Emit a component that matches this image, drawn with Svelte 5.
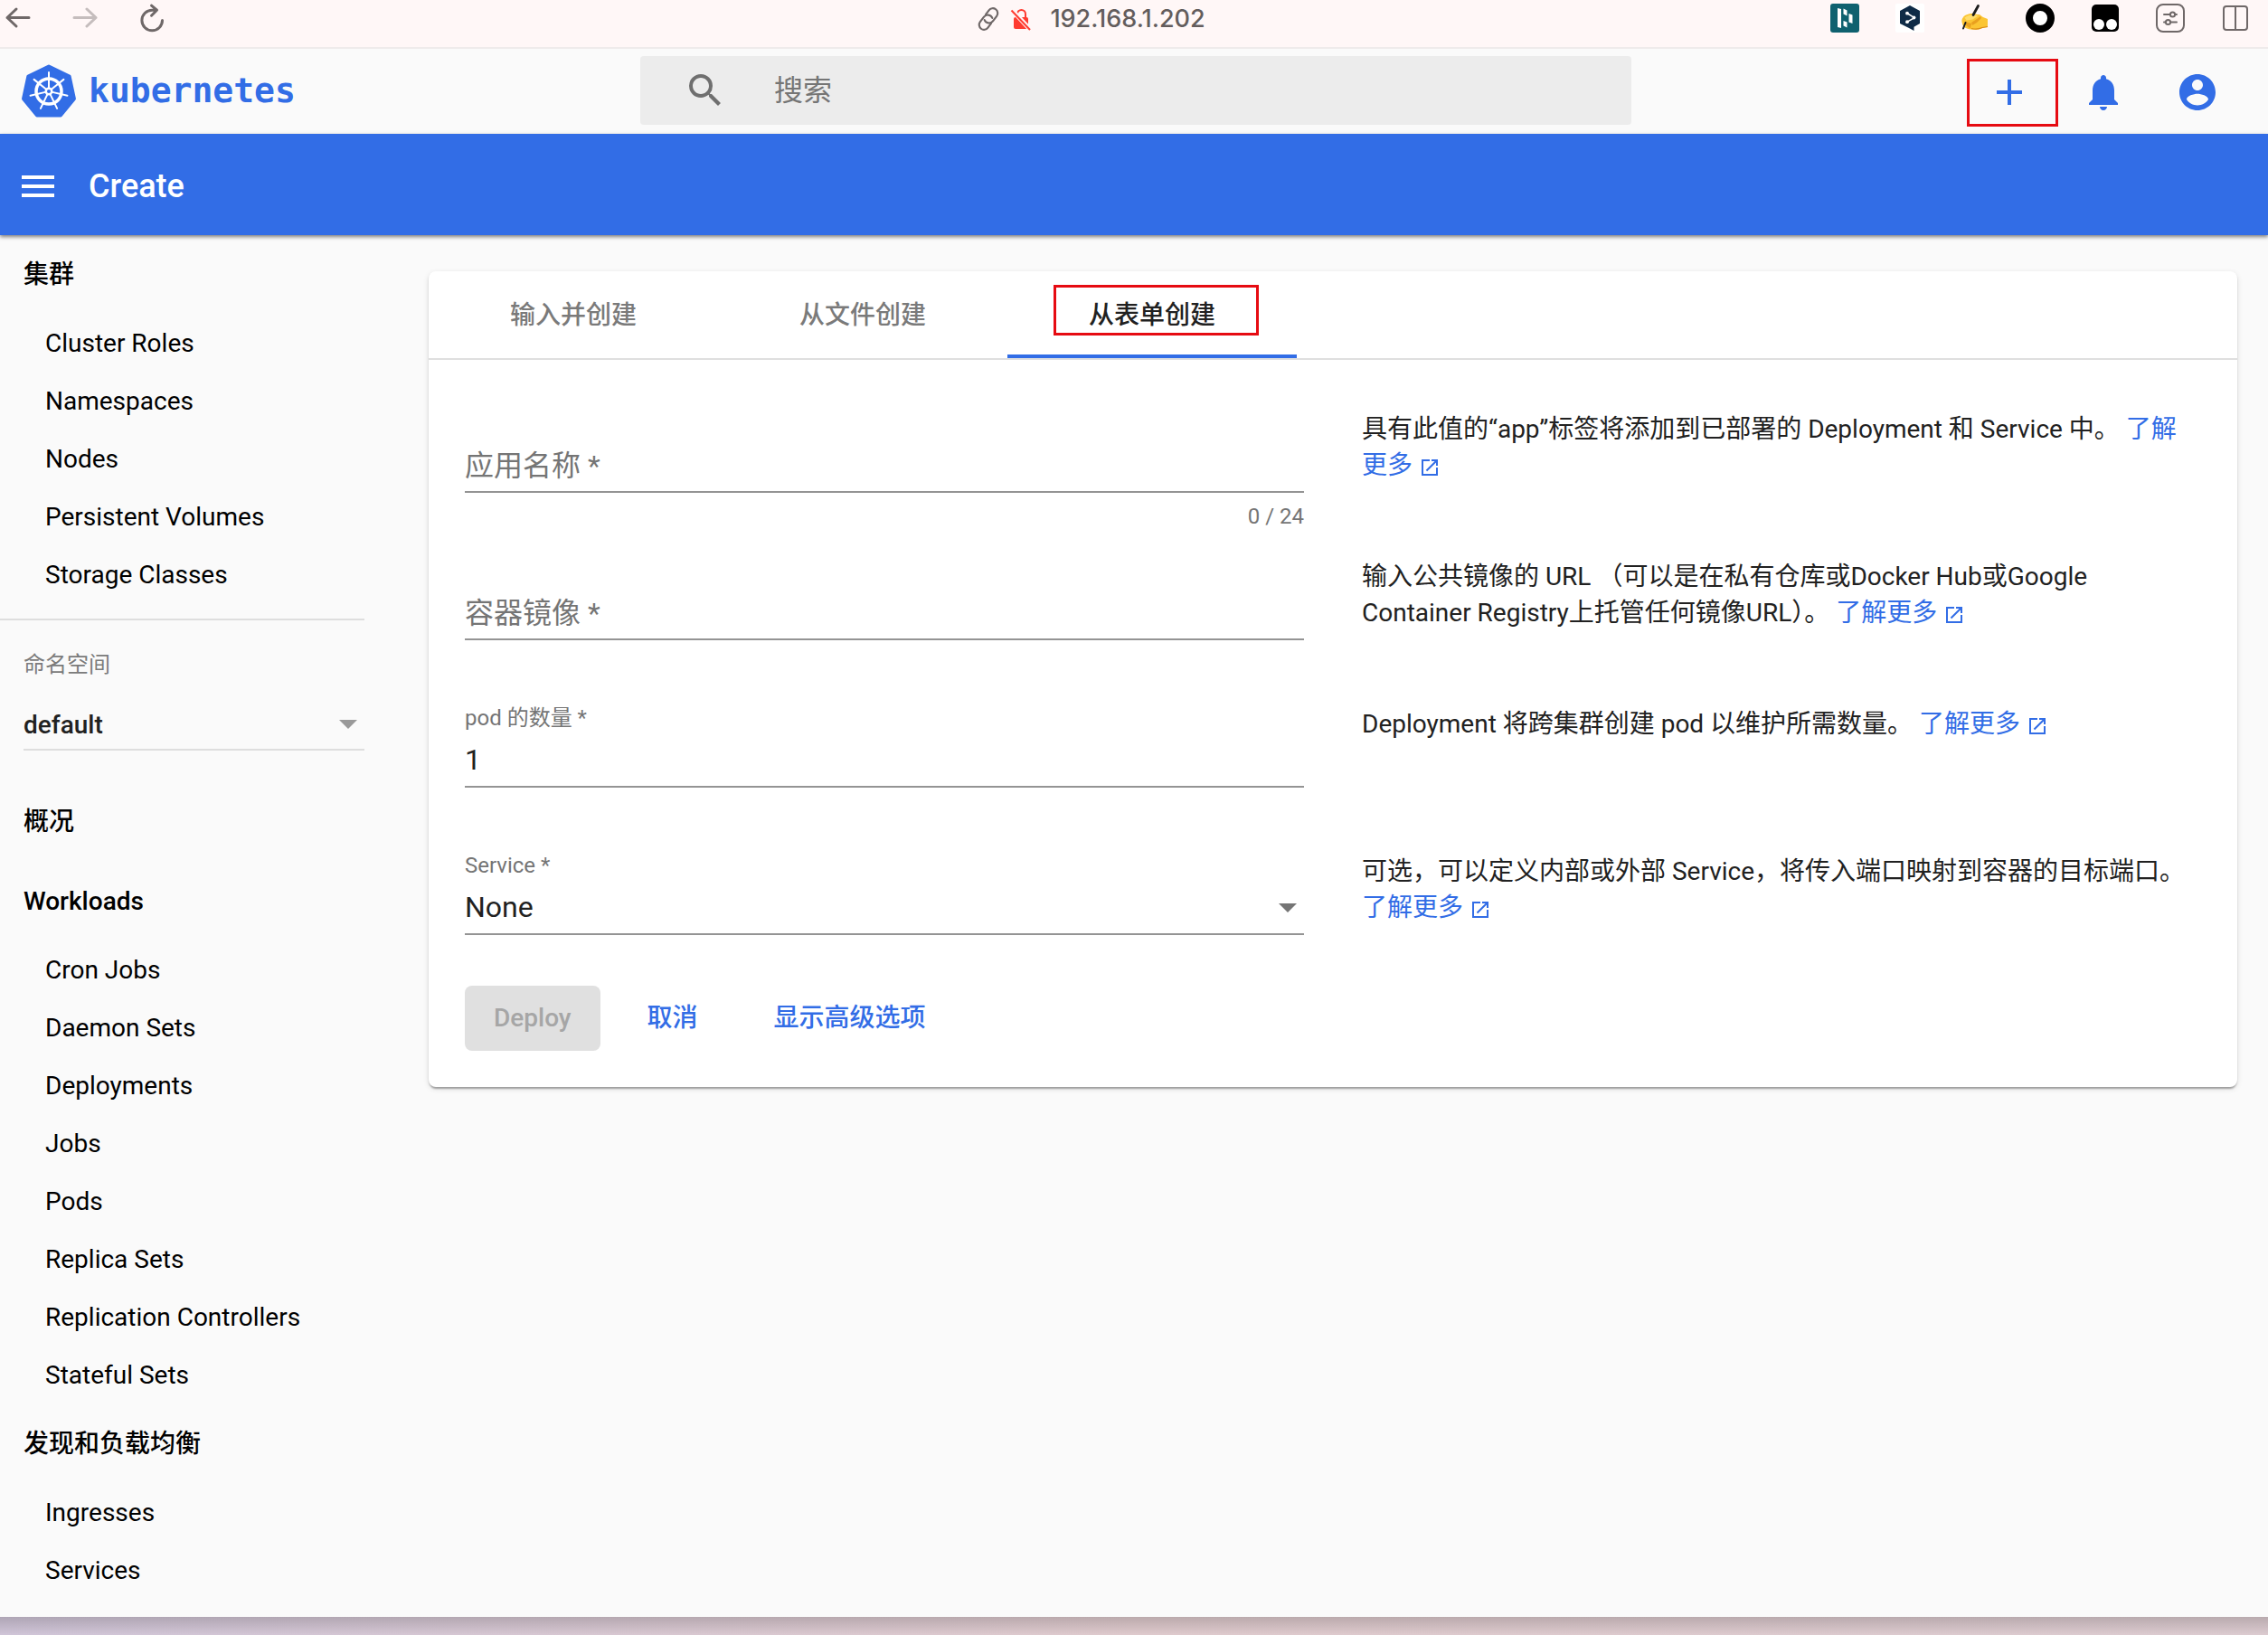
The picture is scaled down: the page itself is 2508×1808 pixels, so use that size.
<script>
  let appName = ''
  let containerImage = ''
  let pods = '1'
  let service = 'None'
  let namespace = 'default'
  let search = ''
  let activeTab = 2

  const maxNameLength = 24

  const tabs = ['输入并创建', '从文件创建', '从表单创建']
  const cluster = [
    'Cluster Roles',
    'Namespaces',
    'Nodes',
    'Persistent Volumes',
    'Storage Classes',
  ]
  const workloads = [
    'Cron Jobs',
    'Daemon Sets',
    'Deployments',
    'Jobs',
    'Pods',
    'Replica Sets',
    'Replication Controllers',
    'Stateful Sets',
  ]
  const discovery = ['Ingresses', 'Services']

  // spokes of the logo wheel
  const spokes = [0, 1, 2, 3, 4, 5, 6].map((i) => (i * 360) / 7)
</script>

{#snippet navGroup(title, items)}
  <a class="nav_title" href="#top">{title}</a>
  {#each items as item}
    <a class="nav_item" href="#top">{item}</a>
  {/each}
{/snippet}

{#snippet learnMore()}
  <a class="more" href="#top"
    >了解更多&nbsp;<svg class="external" viewBox="0 0 24 24"
      ><path
        d="M19 19H5V5h7V3H3v18h18v-9h-2v7zM14 3v2h3.590l-9.830 9.830 1.410 1.410L19 6.410V10h2V3h-7z" /></svg
    ></a>
{/snippet}

<div class="window">
  <div class="browser">
    <div class="browser_nav">
      <button aria-label="Back">
        <svg class="line" viewBox="0 0 32 32"><path d="M28 15.500H4M14 6L4 15.500 14 25" /></svg>
      </button>
      <button aria-label="Forward" disabled>
        <svg class="line" viewBox="0 0 32 32"><path d="M4 15.500h24M18 6l10 9.500L18 25" /></svg>
      </button>
      <button aria-label="Reload">
        <svg class="line" viewBox="0 0 32 32">
          <path d="M27.500 18.500a11.300 11.300 0 1 1-11.300-11.300h5M15.500 2.200l6 5-6 6" />
        </svg>
      </button>
    </div>
    <div class="address">
      <svg class="link" viewBox="0 0 26 26">
        <g transform="rotate(-53 13 13)">
          <path d="M11 18H5.500a5 5 0 0 1 0-10H12a5 5 0 0 1 4.200 7.600" />
          <path d="M15 8h5.500a5 5 0 0 1 0 10H14a5 5 0 0 1-4.200-7.600" />
        </g>
      </svg>
      <svg class="lock" viewBox="0 0 24 26">
        <path class="shackle" d="M8 12V7.500a4.500 4.500 0 0 1 9 0V12" />
        <rect x="4" y="11" width="16" height="13" rx="2" />
        <path class="gap" d="M2.500 3.500l19.500 21" />
        <path class="slash" d="M1.500 3.500l20.500 21.500" />
      </svg>
      <span>192.168.1.202</span>
    </div>
    <div class="extensions">
      <button aria-label="Extension">
        <svg viewBox="0 0 32 32">
          <rect width="32" height="32" rx="3" fill="#0f616f" />
          <path
            fill="#fff"
            d="M8 5l4 1v21l-4-1zM14.500 5.500l4 2v6l-4-2zM14.500 19l4 1.500v6l-4-2zM20.500 11l4 1.500v9.500l-4-1.500z" />
        </svg>
      </button>
      <button aria-label="Translate">
        <svg viewBox="0 0 32 32">
          <rect width="32" height="32" rx="2" fill="#fff" />
          <path fill="#0f2b46" d="M16 2l11 6v14l-6.500 3.800V30L16 27.500 5 22V8z" />
          <path stroke="#fff" stroke-width="1.500" fill="none" d="M13.500 11l7.500 4.700-8 4.500" />
          <circle cx="13" cy="10.700" r="1.900" fill="#fff" />
          <circle cx="20.500" cy="15.500" r="1.900" fill="#fff" />
          <circle cx="13" cy="20.200" r="1.900" fill="#fff" />
        </svg>
      </button>
      <button aria-label="Notes">
        <svg viewBox="0 0 32 32">
          <path
            fill="#fbc533"
            d="M3 15c1-2 6-4 10-4l6 1c3-.500 4 2 6 3l5 2v9l-6 1c-3 2-9 2-13 1.500-4-.500-9-3-9-6.500-1-2-1-5 1-7z" />
          <path fill="#e9a01f" d="M5 20l7 2-1 5c-3-.500-6-3-6-7zM12 21l6-4 4-3 1 2-5 5-5 3z" />
          <path fill="#ffdc6b" d="M4.500 15.500c3-2.500 7-3 10-3l5 1-6 4-7 1z" />
          <path stroke="#d98a17" stroke-width="1.200" fill="none" d="M12 27.500c5 1 9 .500 12-1l6-1" />
          <path
            stroke="#1c1c1c"
            stroke-width="2.800"
            stroke-linecap="round"
            fill="none"
            d="M19.500 2.500l-5.500 10" />
          <path stroke="#1c1c1c" stroke-width="2" stroke-linecap="round" fill="none" d="M5.500 21L3 27.500" />
        </svg>
      </button>
      <button aria-label="Recorder">
        <svg viewBox="0 0 32 32">
          <circle cx="16" cy="16" r="12" fill="#fff" stroke="#000" stroke-width="8" />
        </svg>
      </button>
      <button aria-label="Scripts">
        <svg viewBox="0 0 32 32">
          <rect x="1" y="1" width="30" height="30" rx="5" />
          <circle cx="9" cy="23" r="6" fill="#fff" />
          <circle cx="23" cy="23" r="6" fill="#fff" />
        </svg>
      </button>
      <button aria-label="Site settings">
        <svg class="line thin" viewBox="0 0 32 32">
          <rect x="1" y="1" width="30" height="30" rx="7" />
          <path d="M9 12h6.500M21.500 12H23M9 20.500h1.500M16.500 20.500H23" />
          <circle cx="18.500" cy="12" r="2.600" />
          <circle cx="13.500" cy="20.500" r="2.600" />
        </svg>
      </button>
      <button aria-label="Split view">
        <svg class="line thin" viewBox="0 0 32 32">
          <rect x="3" y="3" width="26" height="26" rx="3" />
          <path d="M16 3v26" />
        </svg>
      </button>
    </div>
  </div>

  <header class="header">
    <a class="logo" href="#top">
      <svg viewBox="0 0 60 60">
        <path
          fill="#326de6"
          stroke="#326de6"
          stroke-width="4"
          stroke-linejoin="round"
          d="M30 2.500L53.500 14 59 39.500 43.500 58.500H16.500L1 39.500 6.500 14z"
          transform="translate(1 1) scale(.966)" />
        <g fill="none" stroke="#fff">
          <circle cx="30" cy="31" r="14" stroke-width="3.500" />
          {#each spokes as angle}
            <path stroke-width="2" stroke-linecap="round" d="M30 27V10" transform="rotate({angle} 30 31)" />
          {/each}
        </g>
        <circle cx="30" cy="31" r="4.500" fill="#fff" />
        <circle cx="30" cy="31" r="2" fill="#326de6" />
      </svg>
      <span>kubernetes</span>
    </a>
    <label class="search">
      <svg viewBox="0 0 24 24">
        <path
          d="M15.500 14h-.790l-.280-.270A6.471 6.471 0 0 0 16 9.500 6.500 6.500 0 1 0 9.500 16c1.610 0 3.090-.590 4.230-1.570l.270.280v.790l5 4.990L20.490 19l-4.990-5zm-6 0C7.010 14 5 11.990 5 9.500S7.010 5 9.500 5 14 7.010 14 9.500 11.990 14 9.500 14z" />
      </svg>
      <input type="text" placeholder="搜索" aria-label="搜索" bind:value={search} />
    </label>
    <div class="actions">
      <button class="marked" aria-label="Create">
        <svg viewBox="0 0 24 24"><path d="M19 13h-6v6h-2v-6H5v-2h6V5h2v6h6v2z" /></svg>
      </button>
      <button aria-label="Notifications">
        <svg viewBox="0 0 24 24">
          <path
            d="M12 22c1.100 0 2-.9 2-2h-4c0 1.100.9 2 2 2zm6-6v-5c0-3.070-1.630-5.640-4.500-6.320V4c0-.830-.670-1.500-1.500-1.500s-1.500.670-1.500 1.500v.680C7.640 5.360 6 7.920 6 11v5l-2 2v1h16v-1l-2-2z" />
        </svg>
      </button>
      <button aria-label="Account">
        <svg viewBox="0 0 24 24">
          <path
            d="M12 2C6.480 2 2 6.480 2 12s4.480 10 10 10 10-4.480 10-10S17.520 2 12 2zm0 3c1.660 0 3 1.340 3 3s-1.340 3-3 3-3-1.340-3-3 1.340-3 3-3zm0 14.200c-2.500 0-4.710-1.280-6-3.220.030-1.990 4-3.080 6-3.080 1.990 0 5.970 1.090 6 3.080-1.290 1.940-3.500 3.220-6 3.220z" />
        </svg>
      </button>
    </div>
  </header>

  <div class="toolbar">
    <button aria-label="Menu">
      <svg viewBox="0 0 24 24"><path d="M3 18h18v-2H3v2zm0-5h18v-2H3v2zm0-7v2h18V6H3z" /></svg>
    </button>
    <h1>Create</h1>
  </div>

  <div class="body">
    <nav class="sidebar">
      {@render navGroup('集群', cluster)}
      <hr />
      <div class="namespace">
        <label for="namespace">命名空间</label>
        <div class="select">
          <select id="namespace" bind:value={namespace}>
            <option>default</option>
          </select>
          <span class="arrow"></span>
        </div>
      </div>
      {@render navGroup('概况', [])}
      {@render navGroup('Workloads', workloads)}
      {@render navGroup('发现和负载均衡', discovery)}
    </nav>

    <main>
      <section class="card">
        <div class="tabs" role="tablist">
          {#each tabs as tab, i}
            <button
              role="tab"
              class:active={activeTab === i}
              aria-selected={activeTab === i}
              on:click={() => (activeTab = i)}>
              <span class:marked={i === 2}>{tab}</span>
            </button>
          {/each}
        </div>

        <form on:submit|preventDefault>
          <div class="row">
            <div class="field">
              <label class:empty={!appName} for="app-name">应用名称 *</label>
              <input id="app-name" type="text" maxlength={maxNameLength} bind:value={appName} />
              <span class="hint">{appName.length} / {maxNameLength}</span>
            </div>
            <p>
              具有此值的“app”标签将添加到已部署的 Deployment 和 Service 中。 {@render learnMore()}
            </p>
          </div>

          <div class="row">
            <div class="field">
              <label class:empty={!containerImage} for="image">容器镜像 *</label>
              <input id="image" type="text" bind:value={containerImage} />
            </div>
            <p>
              输入公共镜像的 URL （可以是在私有仓库或Docker Hub或Google Container
              Registry上托管任何镜像URL）。 {@render learnMore()}
            </p>
          </div>

          <div class="row">
            <div class="field">
              <label for="pods">pod 的数量 *</label>
              <input id="pods" type="text" inputmode="numeric" bind:value={pods} />
            </div>
            <p>Deployment 将跨集群创建 pod 以维护所需数量。 {@render learnMore()}</p>
          </div>

          <div class="row">
            <div class="field">
              <label for="service">Service *</label>
              <select id="service" bind:value={service}>
                <option>None</option>
                <option>Internal</option>
                <option>External</option>
              </select>
              <span class="arrow"></span>
            </div>
            <p>
              可选，可以定义内部或外部 Service，将传入端口映射到容器的目标端口。 {@render learnMore()}
            </p>
          </div>

          <div class="buttons">
            <button type="submit" disabled={!appName || !containerImage}>Deploy</button>
            <button type="button">取消</button>
            <button type="button">显示高级选项</button>
          </div>
        </form>
      </section>
    </main>
  </div>
  <div class="desktop"></div>
</div>

<style>
  :global(body) {
    background: #fafafa;
  }

  .window {
    min-height: 100vh;
    display: flex;
    flex-direction: column;
    font-family: Roboto, 'Noto Sans CJK SC', sans-serif;
    font-size: 28px;
    line-height: 40px;
    color: #212121;
    background: #fafafa;
  }

  .window * {
    box-sizing: border-box;
  }

  button,
  input,
  select {
    font: inherit;
    color: inherit;
    background: none;
    border: 0;
    border-radius: 0;
    padding: 0;
    margin: 0;
    outline: none;
    appearance: none;
  }

  button {
    cursor: pointer;
  }

  svg {
    display: block;
    flex: none;
  }

  a {
    color: inherit;
    text-decoration: none;
  }

  /* browser bar */
  .browser {
    display: grid;
    grid-template-columns: 1fr auto 1fr;
    align-items: start;
    height: 54px;
    padding: 4px 20px 0 4px;
    background: #fff7f7;
    border-bottom: 2px solid #efebeb;
  }

  .browser svg {
    width: 32px;
    height: 32px;
  }

  .browser_nav {
    display: flex;
    gap: 42px;
  }

  .browser_nav button:disabled {
    opacity: 0.4;
  }

  .line {
    fill: none;
    stroke: #6f6868;
    stroke-width: 3;
    stroke-linecap: round;
    stroke-linejoin: round;
  }

  .line.thin {
    stroke-width: 2;
  }

  .address {
    display: flex;
    align-items: center;
    height: 34px;
    margin-right: 80px;
    font-family: Inter, sans-serif;
    font-size: 27px;
    font-weight: 500;
    color: #635d5d;
  }

  .address .link {
    width: 28px;
    height: 28px;
    margin-right: 10px;
    fill: none;
    stroke: #6f6868;
    stroke-width: 2;
    stroke-linecap: round;
  }

  .address .lock {
    width: 24px;
    height: 26px;
    margin-right: 20px;
    fill: #ff3b30;
  }

  .lock path {
    fill: none;
    stroke: #ff3b30;
    stroke-width: 2;
  }

  .lock .gap {
    stroke: #fff7f7;
    stroke-width: 5;
  }

  .extensions {
    display: flex;
    justify-content: flex-end;
    gap: 40px;
  }

  /* header */
  .header {
    display: flex;
    align-items: center;
    height: 94px;
    padding: 0 38px 2px 24px;
  }

  .logo {
    display: flex;
    align-items: center;
    flex: 0 0 684px;
    gap: 14px;
    font-family: 'DejaVu Sans Mono', monospace;
    font-size: 38px;
    font-weight: 700;
    color: #326de6;
  }

  .logo svg {
    width: 60px;
    height: 60px;
  }

  .search {
    display: flex;
    align-items: center;
    flex: 1;
    height: 76px;
    padding: 0 48px;
    gap: 52px;
    background: #ececec;
    border-radius: 4px;
  }

  .search svg {
    width: 48px;
    height: 48px;
    fill: #6f6f6f;
  }

  .search input {
    flex: 1;
    font-size: 32px;
  }

  .search input::placeholder {
    color: #757575;
    opacity: 1;
  }

  .actions {
    display: flex;
    justify-content: flex-end;
    flex: 0 0 666px;
    padding-top: 4px;
    gap: 24px;
  }

  .actions button {
    display: flex;
    align-items: center;
    justify-content: center;
    width: 80px;
    height: 80px;
  }

  .actions svg {
    width: 48px;
    height: 48px;
    fill: #326de6;
  }

  .marked {
    position: relative;
  }

  .marked::after {
    content: '';
    position: absolute;
    border: 3px solid #e60b12;
  }

  .actions .marked::after {
    inset: 3px -14px 2px -7px;
  }

  .tabs .marked::after {
    inset: -17px -48px -6px -39px;
  }

  .toolbar {
    position: relative;
    display: flex;
    align-items: center;
    height: 112px;
    padding: 4px 18px 0;
    gap: 32px;
    color: #fff;
    background: #326de6;
    box-shadow: 0 2px 4px rgba(0, 0, 0, 0.5);
  }

  .toolbar svg {
    width: 48px;
    height: 48px;
    fill: #fff;
  }

  h1 {
    margin: 0;
    font-size: 36px;
    font-weight: 500;
  }

  .body {
    display: flex;
    flex: 1;
  }

  /* sidebar */
  .sidebar {
    flex: 0 0 440px;
    padding: 0 37px 19px 0;
    color: #000;
  }

  .nav_title,
  .nav_item {
    display: flex;
    align-items: center;
  }

  .nav_title {
    height: 88px;
    padding-left: 26px;
    font-weight: 500;
  }

  .nav_item {
    height: 64px;
    padding-left: 50px;
  }

  hr {
    height: 2px;
    margin: 16px 0 0;
    border: 0;
    background: #dedede;
  }

  .namespace {
    padding: 33px 0 35px 26px;
  }

  .namespace label {
    display: block;
    height: 32px;
    font-size: 24px;
    line-height: 32px;
    color: #7b7b7b;
  }

  .select {
    display: grid;
    align-items: center;
    margin-top: 23px;
    border-bottom: 2px solid #dedede;
  }

  .select select {
    grid-area: 1 / 1;
    height: 54px;
    padding-top: 1px;
    font-weight: 500;
    color: #212121;
  }

  .arrow {
    justify-self: end;
    margin-right: 8px;
    border: 10px solid transparent;
    border-top-color: #757575;
    border-bottom: 0;
    pointer-events: none;
  }

  .select .arrow {
    grid-area: 1 / 1;
    border-top-color: #999;
  }

  /* form */
  main {
    flex: 1;
    min-width: 0;
    padding: 40px 34px;
  }

  .card {
    background: #fff;
    border-radius: 8px;
    box-shadow:
      0 4px 2px -2px rgba(0, 0, 0, 0.2),
      0 2px 2px rgba(0, 0, 0, 0.14),
      0 2px 6px rgba(0, 0, 0, 0.12);
  }

  .tabs {
    display: flex;
    height: 98px;
    border-bottom: 2px solid #dfdfdf;
  }

  .tabs button {
    width: 320px;
    padding-top: 6px;
    border-bottom: 4px solid transparent;
    font-weight: 500;
    color: #7a7a7a;
  }

  .tabs button.active {
    color: #212121;
    border-bottom-color: #326de6;
  }

  form {
    padding: 40px;
  }

  .row {
    display: grid;
    grid-template-columns: 1fr 1fr;
    gap: 64px;
    min-height: 163px;
  }

  .row p {
    margin: 0;
    padding-top: 17px;
  }

  .more {
    color: #326de6;
  }

  .external {
    display: inline-block;
    width: 24px;
    height: 24px;
    vertical-align: -5px;
    fill: #326de6;
  }

  .field {
    display: grid;
    grid-template-rows: 32px 61px 38px;
    align-content: start;
    align-items: center;
    padding-top: 14px;
  }

  .field label {
    grid-area: 1 / 1;
    font-size: 24px;
    line-height: 32px;
    color: #757575;
  }

  .field label.empty {
    grid-area: 2 / 1;
    font-size: 32px;
  }

  .field input,
  .field select {
    grid-area: 2 / 1;
    width: 100%;
    height: 61px;
    font-size: 32px;
    border-bottom: 2px solid #949494;
  }

  .field .arrow {
    grid-area: 2 / 1;
  }

  .hint {
    grid-area: 3 / 1;
    justify-self: end;
    align-self: end;
    font-size: 24px;
    line-height: 24px;
    color: #757575;
  }

  .buttons {
    display: flex;
    gap: 20px;
  }

  .buttons button {
    height: 72px;
    padding: 0 32px;
    border-radius: 8px;
    font-weight: 500;
    color: #326de6;
  }

  .buttons button:disabled {
    color: #a6a6a6;
    background: #e0e0e0;
  }

  .desktop {
    height: 20px;
    background:
      linear-gradient(rgba(0, 0, 0, 0.16), transparent),
      linear-gradient(90deg, #d0c5d8, #dfcacd 50%, #dccbd0);
  }
</style>
